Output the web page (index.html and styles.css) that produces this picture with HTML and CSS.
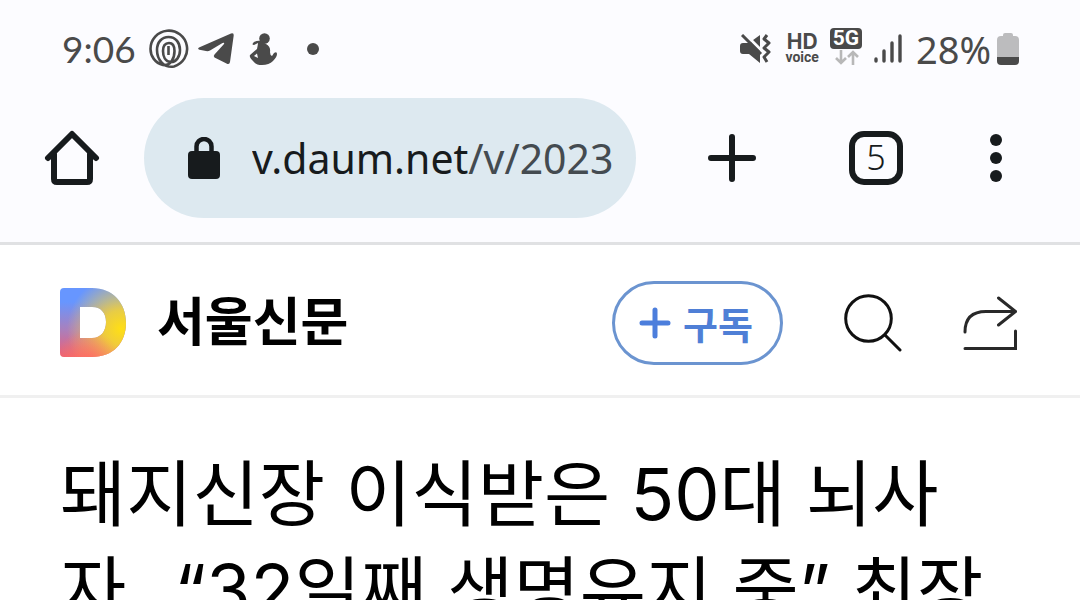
FILE: index.html
```html
<!DOCTYPE html>
<html lang="ko">
<head>
<meta charset="utf-8">
<meta name="viewport" content="width=device-width, initial-scale=1">
<title>서울신문</title>
<link rel="stylesheet" href="styles.css">
</head>
<body>
<div class="chrome">
  <div class="status">
    <span class="clock">9:06</span>
    <svg class="st-spiral" width="40" height="40" viewBox="0 0 40 40" fill="none" stroke="#4a4a4a" stroke-width="2.6">
      <path d="M14 36C6 34 1.500 27 1.500 20A18.300 18.300 0 1 1 25 37.500C15 39 8 31 8 21C8 13 13 8 19.500 8C27 8 31 14 31 21C31 28 27 33 22 33C16 33 14 27 14 22C14 17 16 14 20 14C24 14 25.500 17 25.500 22C25.500 29 22 37 14 36Z"/>
      <path d="M19.500 17V26"/>
    </svg>
    <svg class="st-plane" width="38" height="34" viewBox="0 0 38 34" fill="#4a4a4a">
      <path d="M2 15.500L34 1.500Q37 .5 36.700 3.500L33 30Q32.500 33 29.500 31.500L17.500 25.500Q16 24 17.500 22.500L27 12Q28 10 25.500 11L13 18.500Q11 19.500 9 19L2.500 17.800Q0 17 2 15.500Z"/>
    </svg>
    <svg class="st-figure" width="28" height="32" viewBox="0 0 28 32" fill="#4a4a4a">
      <circle cx="15.500" cy="5.500" r="5.300"/>
      <path d="M5 9Q9 7 12 8L17 11Q22 14 21 19Q21 22 23 23L25 20Q28 18 28 21Q28 24 24 28Q20 32 13 32Q7 32 4 28Q0 24 1 22L8 16Q9 11 9 10L5 12Q2 12 5 9Z"/>
      <path d="M5 23L8 20.500L9 25Z" fill="#fcfcff"/>
    </svg>
    <span class="st-dot"></span>
    <div class="status-right">
      <svg width="32" height="30" viewBox="0 0 32 30">
        <path d="M0 12Q0 9 3 9H9L20 1V29L9 20H3Q0 20 0 17Z" fill="#4a4a4a"/>
        <path d="M4 -1L24 19" stroke="#fcfcff" stroke-width="3"/>
        <path d="M2 1L21 20" stroke="#4a4a4a" stroke-width="3"/>
        <path d="M27 1L24 5L29 9L24 14L29 18L24 23L27 28" fill="none" stroke="#4a4a4a" stroke-width="3" stroke-linejoin="round"/>
      </svg>
      <span class="hd"><b>HD</b><small>voice</small></span>
      <span class="net"><b>5G</b>
        <svg width="26" height="15" viewBox="0 0 26 15" fill="none" stroke="#b8b8b8" stroke-width="2.600"><path d="M8 0V13M3 8L8 13L13 8M20 15V2M15 7L20 2L25 7"/></svg>
      </span>
      <svg class="bars" width="28" height="30" viewBox="0 0 28 30" stroke="#4a4a4a" stroke-width="3.400" stroke-linecap="round"><path d="M2 25V27M10 17V27M18 9V27M26 2V27"/></svg>
      <span class="pct">28%</span>
      <svg width="22" height="32" viewBox="0 0 22 32"><path d="M6 3V2Q6 0 8 0H14Q16 0 16 2V3H18Q22 3 22 7V24H0V7Q0 3 4 3Z" fill="#bcbcbe"/><path d="M0 24H22V28Q22 32 18 32H4Q0 32 0 28Z" fill="#4a4a4a"/></svg>
    </div>
  </div>
  <div class="toolbar">
    <button class="tool" aria-label="홈"><svg width="56" height="56" viewBox="0 0 56 56" fill="none" stroke="#171b1d" stroke-width="6" stroke-linejoin="round" stroke-linecap="round"><path d="M4 28L28 4L52 28M10 24V49Q10 52 13 52H43Q46 52 46 49V24"/></svg></button>
    <button class="address">
      <svg width="32" height="42" viewBox="0 0 32 42"><path d="M8.500 16V9.500A7.500 7.500 0 0 1 23.500 9.500V16" fill="none" stroke="#171b1d" stroke-width="4.500"/><rect y="14" width="32" height="28" rx="4" fill="#171b1d"/></svg>
      <span class="url">v.daum.net<span class="path">/v/2023</span></span>
    </button>
    <button class="tool plus" aria-label="새 탭"><svg width="48" height="48" viewBox="0 0 48 48" stroke="#171b1d" stroke-width="6" stroke-linecap="round"><path d="M24 3V45M3 24H45"/></svg></button>
    <button class="tool" aria-label="탭 목록"><span class="tabs">5</span></button>
    <button class="tool menu" aria-label="메뉴"><svg width="12" height="48" viewBox="0 0 12 48" fill="#171b1d"><circle cx="6" cy="6" r="6"/><circle cx="6" cy="24" r="6"/><circle cx="6" cy="42" r="6"/></svg></button>
  </div>
</div>
<header class="site">
  <a class="logo" href="#" aria-label="Daum"><svg width="66" height="70" viewBox="0 0 66 70">
    <defs>
      <linearGradient id="base" x1="0" y1="0" x2="0" y2="1"><stop offset=".2" stop-color="#6796ff"/><stop offset=".6" stop-color="#a980bd"/><stop offset="1" stop-color="#ef5c74"/></linearGradient>
      <radialGradient id="sun" cx="61" cy="41" r="54" gradientUnits="userSpaceOnUse"><stop offset="0" stop-color="#ffdf14"/><stop offset=".35" stop-color="#f3d334" stop-opacity=".9"/><stop offset="1" stop-color="#f3ca60" stop-opacity="0"/></radialGradient>
      <radialGradient id="warm" cx="28" cy="76" r="34" gradientUnits="userSpaceOnUse"><stop offset="0" stop-color="#ff6865"/><stop offset="1" stop-color="#ff8855" stop-opacity="0"/></radialGradient>
      <path id="dshape" fill-rule="evenodd" d="M4 0H32C53 0 66 15 66 35S53 69 32 69H4Q0 69 0 65V4Q0 0 4 0ZM20 19V50H32C41 50 46 43 46 34S41 19 32 19Z"/>
    </defs>
    <use href="#dshape" fill="url(#base)"/><use href="#dshape" fill="url(#sun)"/><use href="#dshape" fill="url(#warm)"/>
  </svg></a>
  <a class="press" href="#">서울신문</a>
  <button class="subscribe"><svg width="32" height="32" viewBox="0 0 32 32" stroke="#4c7edc" stroke-width="5" stroke-linecap="round"><path d="M16 3V29M3 16H29"/></svg>구독</button>
  <button class="icon search" aria-label="검색"><svg width="58" height="58" viewBox="0 0 58 58" fill="none" stroke="#111" stroke-width="3" stroke-linecap="round"><circle cx="24.500" cy="24.500" r="22.800"/><path d="M41 41L56 56"/></svg></button>
  <button class="icon" aria-label="공유"><svg width="54" height="54" viewBox="0 0 54 54" fill="none" stroke="#292929" stroke-width="3" stroke-linecap="round"><path d="M2 36C2 21 10 15.500 23 15.500H52M35.500 2L52.500 15.500L35.500 29M2 52.500H52.500V35"/></svg></button>
</header>
<main class="article">
  <h1>돼지신장 이식받은 50대 뇌사<br>자<span class="dots">…</span>“32일째 생명유지 중” 최장</h1>
</main>
</body>
</html>
```

FILE: styles.css
```css
* { box-sizing: border-box; }
html { overflow: hidden; }
body {
  margin: 0;
  height: 100vh;
  overflow: hidden;
  background: #fff;
  color: #000;
  font-family: "Noto Sans", "Noto Sans CJK KR", sans-serif;
}
button {
  border: 0;
  padding: 0;
  background: none;
  font: inherit;
  color: inherit;
  cursor: pointer;
}
a { color: inherit; text-decoration: none; }
svg { display: block; flex: none; }

.chrome { background: #fcfcff; border-bottom: 3px solid #e0e1e3; }
.status {
  display: flex;
  align-items: center;
  height: 98px;
  padding: 0 61px 1px 62px;
  color: #4a4a4a;
}
.clock { font: 37px/48px Lato, sans-serif; }
.st-spiral { margin-left: 13px; }
.st-plane { margin-left: 8px; }
.st-figure { margin-left: 14px; }
.st-dot { width: 12px; height: 12px; margin-left: 30px; border-radius: 50%; background: #4a4a4a; }
.status-right { display: flex; align-items: center; margin-left: auto; }
.hd {
  display: flex;
  flex-direction: column;
  align-items: center;
  margin-left: 13px;
}
.hd b { font: 700 21px/16px Inter, sans-serif; }
.hd small { font: 700 14px/14px Roboto, sans-serif; }
.net { display: flex; flex-direction: column; align-items: center; gap: 1px; margin: 0 0 4px 11px; }
.net b {
  width: 32px;
  border-radius: 4px;
  background: #4a4a4a;
  color: #fff;
  font: 700 21px/21px Roboto, sans-serif;
  text-align: center;
}
.bars { margin-left: 12px; }
.pct { margin: 0 6px 0 14px; font-size: 38px; line-height: 48px; }

.toolbar { display: flex; align-items: center; padding: 0 36px 24px 0; }
.tool { display: flex; align-items: center; justify-content: center; width: 144px; height: 120px; flex: none; }
.plus { margin-left: 24px; }
.menu { width: 96px; }
.address {
  display: flex;
  align-items: center;
  flex: 1;
  min-width: 0;
  height: 120px;
  padding: 0 16px 0 44px;
  gap: 32px;
  border-radius: 60px;
  background: #dde9f0;
  color: #171b1d;
}
.url { overflow: hidden; white-space: nowrap; font-size: 41px; line-height: 56px; }
.path { color: #444b50; }
.tabs {
  width: 54px;
  height: 54px;
  border: 6px solid #171b1d;
  border-radius: 15px;
  font-size: 34px;
  font-weight: 300;
  line-height: 40px;
  color: #171b1d;
}

.site {
  display: flex;
  align-items: center;
  height: 153px;
  padding: 5px 63px 0 60px;
  border-bottom: 3px solid #f0f0f0;
}
.press { margin-left: 31px; padding-bottom: 8px; font: 700 52px/72px "Noto Sans CJK KR", sans-serif; }
.subscribe {
  display: flex;
  align-items: center;
  gap: 12px;
  height: 84px;
  margin-left: auto;
  padding: 0 27px 0 24px;
  border: 3px solid #6b94d0;
  border-radius: 42px;
  color: #4f7fd6;
  font: 700 38px/56px "Noto Sans CJK KR", sans-serif;
}
.icon { margin-left: 61px; }

.article { padding: 48px 60px; }
.article h1 {
  margin: 0;
  font: 400 72px/96px Inter, "Noto Sans CJK KR", sans-serif;
  white-space: nowrap;
}
.dots { font-family: Roboto, sans-serif; }
```
